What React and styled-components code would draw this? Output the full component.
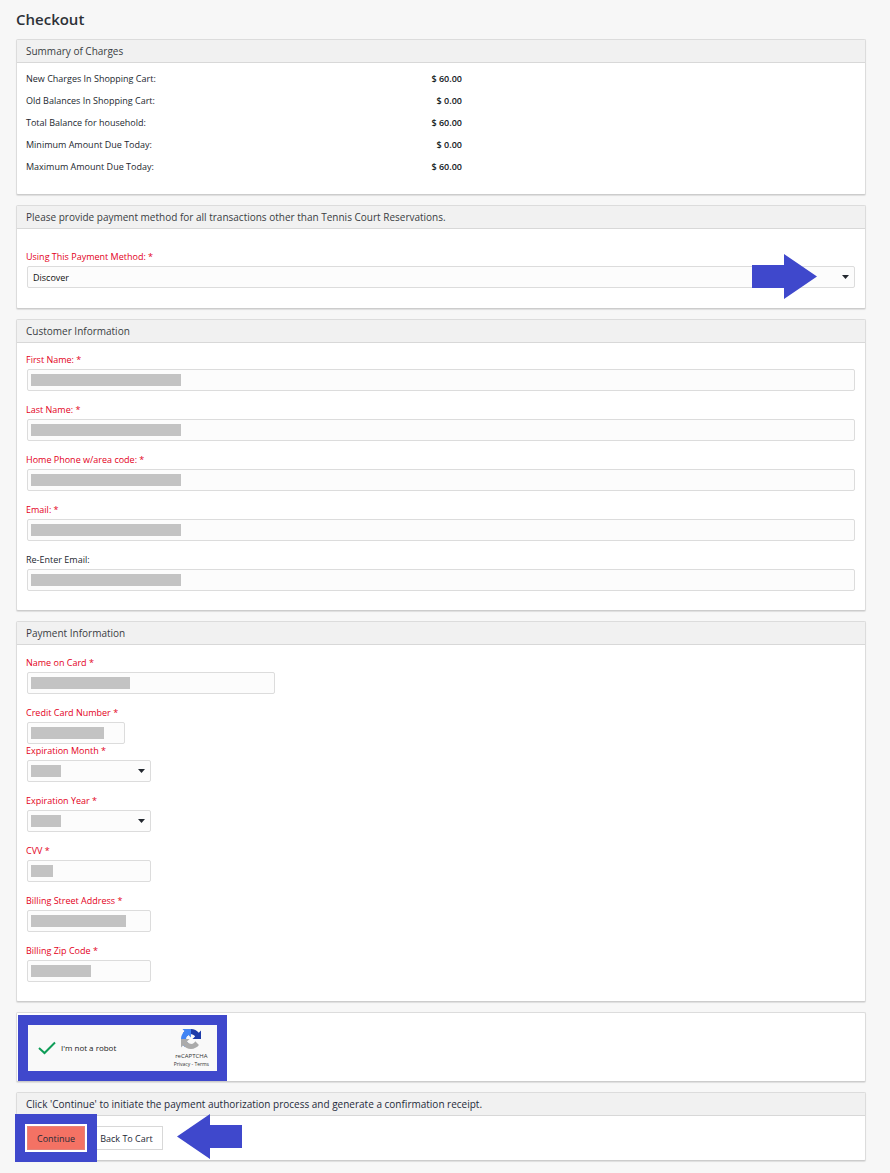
import React from 'react';
import styled, { createGlobalStyle } from 'styled-components';

const GlobalStyle = createGlobalStyle`
  * {
    box-sizing: border-box;
  }

  body {
    margin: 0;
    background: #f7f7f7;
    color: #23282f;
    font-family: 'Open Sans', 'Noto Sans', sans-serif;
    font-size: 9px;
    line-height: 14px;
  }

  button, input, select {
    font-family: inherit;
    font-size: 9px;
  }
`;

const Page = styled.main`
  display: flex;
  flex-direction: column;
  gap: 10px;
  padding: 9px 24px 12px 16px;
`;

const Title = styled.h1`
  margin: 0;
  color: #2d3138;
  font-size: 15px;
  font-weight: 600;
  line-height: 20px;
`;

const Panel = styled.section`
  background: #ffffff;
  border: 1px solid #dcdcdc;
  border-bottom-color: #cccccc;
  border-radius: 2px;
  box-shadow: 0 1px 1px rgba(0, 0, 0, 0.1);
`;

const PanelHeader = styled.h2`
  margin: 0;
  padding: 0 9px;
  background: #f1f1f1;
  border-bottom: 1px solid #d8d8d8;
  color: ${props => (props.$dark ? '#1f2a3a' : '#3a3d43')};
  font-size: 10px;
  font-weight: 400;
  line-height: 22px;
`;

const SummaryBody = styled.div`
  padding: 5px 9px 16px;
`;

const SummaryTable = styled.table`
  width: 100%;
  max-width: 436px;
  border-collapse: collapse;

  th, td {
    height: 22px;
    padding: 0;
  }

  th {
    font-weight: 400;
    text-align: left;
  }

  td {
    color: #111820;
    font-weight: 600;
    text-align: right;
  }
`;

const Fields = styled.div`
  padding: ${props => props.$top}px 10px ${props => props.$bottom || 19}px;
`;

const FieldBox = styled.div`
  max-width: ${props => (props.$width ? `${props.$width}px` : 'none')};
  margin-bottom: ${props => (props.$tight ? 0 : 12)}px;

  &:last-child {
    margin-bottom: 0;
  }
`;

const Label = styled.label`
  display: block;
  height: 16px;
  margin-left: -1px;
  color: ${props => (props.$required ? '#e3001b' : '#23282f')};
  white-space: nowrap;
`;

const Control = styled.div`
  position: relative;
`;

const Input = styled.input`
  display: block;
  width: 100%;
  height: 22px;
  padding: 0 5px;
  background: #fcfcfc;
  border: 1px solid #dcdcdc;
  border-radius: 2px;
`;

const Select = styled.select`
  display: block;
  width: 100%;
  height: 22px;
  padding: 0 5px;
  appearance: none;
  background: #fcfcfc;
  border: 1px solid #dcdcdc;
  border-radius: 2px;
  color: #111111;
`;

const Caret = styled.svg`
  position: absolute;
  top: 9px;
  right: 6px;
  pointer-events: none;
`;

const Mask = styled.span`
  position: absolute;
  top: 5px;
  left: 4px;
  width: ${props => props.$width}px;
  height: 12px;
  background: #c3c3c3;
  pointer-events: none;
`;

const SelectArrow = styled.svg`
  position: absolute;
  top: -12px;
  right: 38px;
  pointer-events: none;
`;

const CaptchaBody = styled.div`
  padding: 2px 1px 0;
`;

const Captcha = styled.div`
  display: flex;
  align-items: center;
  justify-content: space-between;
  width: 209px;
  height: 66px;
  padding: 0 8px 0 10px;
  background: #f9f9f9;
  border: 10px solid #3f48cc;
`;

const RobotLabel = styled.label`
  display: flex;
  align-items: center;
  gap: 4px;
  color: #222222;
  font-size: 8px;
`;

const CheckWrap = styled.span`
  display: grid;
  width: 19px;
  height: 14px;

  > * {
    grid-area: 1 / 1;
  }
`;

const Checkbox = styled.input`
  width: 19px;
  height: 14px;
  margin: 0;
  appearance: none;
`;

const Brand = styled.div`
  display: flex;
  flex-direction: column;
  align-items: center;
  color: #333333;
  font-size: 6px;
  line-height: 8px;

  svg {
    margin-bottom: 3px;
  }

  a {
    color: inherit;
    text-decoration: none;
  }
`;

const BrandLinks = styled.div`
  font-size: 5px;
  white-space: nowrap;
`;

const Actions = styled.div`
  display: flex;
  align-items: center;
  gap: 5px;
  padding: 10px;
`;

const Button = styled.button`
  height: 24px;
  padding: 0 9px;
  background: #ffffff;
  border: 1px solid #d8d8d8;
  color: #1e2835;
  white-space: nowrap;
`;

const ContinueButton = styled(Button)`
  position: relative;
  background: #f47264;
  border-color: #e5837a;
  box-shadow: 0 0 0 2px #ffffff;
  outline: 10px solid #3f48cc;
  outline-offset: 2px;
`;

const BackArrow = styled.svg`
  flex: none;
  margin: -14px 0 -10px 9px;
`;

const charges = [
  { label: 'New Charges In Shopping Cart:', amount: '$ 60.00' },
  { label: 'Old Balances In Shopping Cart:', amount: '$ 0.00' },
  { label: 'Total Balance for household:', amount: '$ 60.00' },
  { label: 'Minimum Amount Due Today:', amount: '$ 0.00' },
  { label: 'Maximum Amount Due Today:', amount: '$ 60.00' },
];

const customerFields = [
  { id: 'firstName', label: 'First Name:', required: true, mask: 150 },
  { id: 'lastName', label: 'Last Name:', required: true, mask: 150 },
  { id: 'homePhone', label: 'Home Phone w/area code:', required: true, mask: 150 },
  { id: 'email', label: 'Email:', required: true, mask: 150 },
  { id: 'emailAgain', label: 'Re-Enter Email:', mask: 150 },
];

const paymentFields = [
  { id: 'cardName', label: 'Name on Card', required: true, mask: 99, width: 248 },
  { id: 'cardNumber', label: 'Credit Card Number', required: true, mask: 73, width: 98, tight: true },
  { id: 'expMonth', label: 'Expiration Month', required: true, mask: 30, width: 124, select: true },
  { id: 'expYear', label: 'Expiration Year', required: true, mask: 30, width: 124, select: true },
  { id: 'cvv', label: 'CVV', required: true, mask: 22, width: 124 },
  { id: 'street', label: 'Billing Street Address', required: true, mask: 95, width: 124 },
  { id: 'zip', label: 'Billing Zip Code', required: true, mask: 60, width: 124 },
];

function DownCaret() {
  return (
    <Caret width="7" height="4" viewBox="0 0 7 4" aria-hidden="true">
      <path d="M0 0H7L3.5 4Z" fill="#23282f" />
    </Caret>
  );
}

function Field({ field, options, children }) {
  return (
    <FieldBox $width={field.width} $tight={field.tight}>
      <Label htmlFor={field.id} $required={field.required}>
        {field.label}{field.required && ' *'}
      </Label>
      <Control>
        {field.select ? (
          <Select id={field.id}>
            {(options || ['']).map(option => <option key={option}>{option}</option>)}
          </Select>
        ) : (
          <Input id={field.id} type="text" />
        )}
        {field.select && <DownCaret />}
        {field.mask && <Mask $width={field.mask} />}
        {children}
      </Control>
    </FieldBox>
  );
}

function RecaptchaLogo() {
  return (
    <svg width="20" height="20" viewBox="0 0 64 64" aria-hidden="true">
      <path fill="#1c3aa9" d="M64 31.955l-.033-1.37V4.687l-7.16 7.16C50.948 4.674 42.033.093 32.05.093c-10.4 0-19.622 4.96-25.458 12.64l11.736 11.86a15.55 15.55 0 0 1 4.754-5.334c2.05-1.6 4.952-2.906 8.968-2.906.485 0 .86.057 1.135.163 4.976.393 9.288 3.14 11.828 7.124l-8.307 8.307L64 31.953" />
      <path fill="#4285f4" d="M31.862.094l-1.37.033H4.594l7.16 7.16C4.58 13.147 0 22.06 0 32.046c0 10.4 4.96 19.622 12.64 25.458L24.5 45.768a15.55 15.55 0 0 1-5.334-4.754c-1.6-2.05-2.906-4.952-2.906-8.968 0-.485.057-.86.163-1.135.393-4.976 3.14-9.288 7.124-11.828l8.307 8.307L31.86.095" />
      <path fill="#ababab" d="M.001 32.045l.033 1.37v25.898l7.16-7.16c5.86 7.173 14.774 11.754 24.76 11.754 10.4 0 19.622-4.96 25.458-12.64l-11.736-11.86a15.55 15.55 0 0 1-4.754 5.334c-2.05 1.6-4.952 2.906-8.968 2.906-.485 0-.86-.057-1.135-.163-4.976-.393-9.288-3.14-11.828-7.124l8.307-8.307c-10.522.04-22.4.066-27.295-.005" />
    </svg>
  );
}

export default function App() {
  return (
    <>
      <GlobalStyle />
      <Page>
        <Title>Checkout</Title>

        <Panel>
          <PanelHeader>Summary of Charges</PanelHeader>
          <SummaryBody>
            <SummaryTable>
              <tbody>
                {charges.map(charge => (
                  <tr key={charge.label}>
                    <th scope="row">{charge.label}</th>
                    <td>{charge.amount}</td>
                  </tr>
                ))}
              </tbody>
            </SummaryTable>
          </SummaryBody>
        </Panel>

        <Panel>
          <PanelHeader>
            Please provide payment method for all transactions other than Tennis Court Reservations.
          </PanelHeader>
          <Fields $top={21} $bottom={20}>
            <Field
              field={{ id: 'method', label: 'Using This Payment Method:', required: true, select: true }}
              options={['Discover']}
            >
              <SelectArrow width="65" height="45" viewBox="0 0 65 45" aria-hidden="true">
                <path d="M0 11H32V0L65 22.5L32 45V34H0Z" fill="#3f48cc" />
              </SelectArrow>
            </Field>
          </Fields>
        </Panel>

        <Panel>
          <PanelHeader>Customer Information</PanelHeader>
          <Fields $top={10}>
            {customerFields.map(field => <Field key={field.id} field={field} />)}
          </Fields>
        </Panel>

        <Panel>
          <PanelHeader>Payment Information</PanelHeader>
          <Fields $top={11}>
            {paymentFields.map(field => <Field key={field.id} field={field} />)}
          </Fields>
        </Panel>

        <Panel>
          <CaptchaBody>
            <Captcha>
              <RobotLabel>
                <CheckWrap>
                  <Checkbox type="checkbox" defaultChecked />
                  <svg width="19" height="14" viewBox="0 0 19 14" aria-hidden="true">
                    <path d="M1 7L6.5 12L17 1.5" fill="none" stroke="#0f9d58" strokeWidth="2" />
                  </svg>
                </CheckWrap>
                I'm not a robot
              </RobotLabel>
              <Brand>
                <RecaptchaLogo />
                <div>reCAPTCHA</div>
                <BrandLinks>
                  <a href="#privacy">Privacy</a> - <a href="#terms">Terms</a>
                </BrandLinks>
              </Brand>
            </Captcha>
          </CaptchaBody>
        </Panel>

        <Panel>
          <PanelHeader $dark>
            Click 'Continue' to initiate the payment authorization process and generate a confirmation receipt.
          </PanelHeader>
          <Actions>
            <ContinueButton type="button">Continue</ContinueButton>
            <Button type="button">Back To Cart</Button>
            <BackArrow width="65" height="45" viewBox="0 0 65 45" aria-hidden="true">
              <path d="M65 11H33V0L0 22.5L33 45V34H65Z" fill="#3f48cc" />
            </BackArrow>
          </Actions>
        </Panel>
      </Page>
    </>
  );
}
